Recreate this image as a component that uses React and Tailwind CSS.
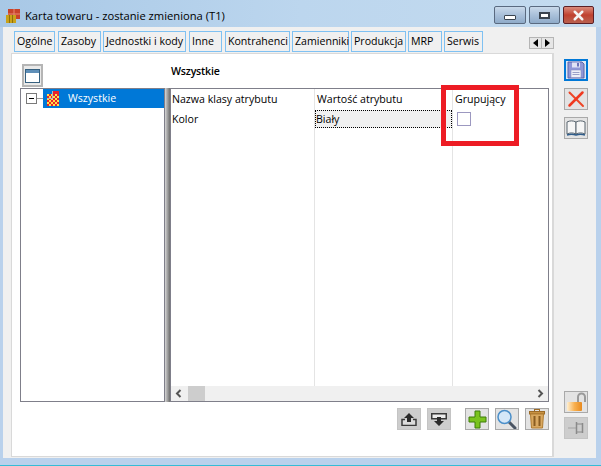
import { X } from "lucide-react";

const font = { fontFamily: '"Open Sans", "Liberation Sans", sans-serif' };

const tabs = [
  ["Ogólne", "w-[41px]", "mr-[3px]"],
  ["Zasoby", "w-[43px]", "mr-[2px]"],
  ["Jednostki i kody", "w-[83px]", "mr-[3px]"],
  ["Inne", "w-[33px]", "mr-[3px]"],
  ["Kontrahenci", "w-[65px]", "mr-[2px]"],
  ["Zamienniki", "w-[57px]", "mr-[2px]"],
  ["Produkcja", "w-[55px]", "mr-[2px]"],
  ["MRP", "w-[34px]", "mr-[2px]"],
  ["Serwis", "w-[39px]", ""],
];

function WindowButtons() {
  return (
    <div className="flex gap-[3px] pt-[6px] pr-[7px]">
      <div className="flex h-[18px] w-[32px] items-end justify-center rounded-[2px] border border-[#5a6a80] bg-gradient-to-b from-[#c9d9ea] via-[#a9c0da] to-[#8fabc9] pb-[3px]">
        <div className="h-[5px] w-[12px] rounded-[1px] border border-[#39434f] bg-white" />
      </div>
      <div className="flex h-[18px] w-[31px] items-center justify-center rounded-[2px] border border-[#5a6a80] bg-gradient-to-b from-[#c9d9ea] via-[#a9c0da] to-[#8fabc9]">
        <div className="h-[7px] w-[11px] border-2 border-[#39434f] bg-white" />
      </div>
      <div className="flex h-[18px] w-[31px] items-center justify-center rounded-[2px] border border-[#5c1f25] bg-gradient-to-b from-[#d98a7c] via-[#c0412f] to-[#b9604f]">
        <X size={15} strokeWidth={4} className="text-[#f4f4f4]" />
      </div>
    </div>
  );
}

function ToolButton({ children, active, flat }) {
  return (
    <div
      className={`flex h-[22px] w-[24px] items-center justify-center border ${
        active ? "border-2 border-[#0078d7] bg-[#dfe8f5]" : flat ? "border-[#c4c4c4] bg-[#cdcdcd]" : "border-[#a9a9a9] bg-[#e3e3e3]"
      }`}
    >
      {children}
    </div>
  );
}

function SaveIcon() {
  return (
    <svg width="18" height="18" viewBox="0 0 18 18">
      <path d="M1 1h14l2 2v14H1z" fill="#8f97d8" stroke="#5c64a8" />
      <rect x="5" y="1.500" width="8" height="5" fill="#dfe3f5" />
      <rect x="10" y="2" width="2" height="3.500" fill="#6a72b8" />
      <rect x="4" y="9" width="10" height="7.500" fill="#eef0f8" stroke="#8a90c0" strokeWidth="0.6" />
      <path d="M5.500 11.500h7M5.500 13.500h7" stroke="#9aa0c8" />
    </svg>
  );
}

function CrossIcon() {
  return (
    <svg width="18" height="18" viewBox="0 0 18 18">
      <path d="M2.500 2.500L16 16" stroke="#ee4526" strokeWidth="2" strokeLinecap="round" />
      <path d="M15.500 2.500L2.500 15.500" stroke="#f0391f" strokeWidth="2.500" strokeLinecap="round" />
    </svg>
  );
}

function BookIcon() {
  return (
    <svg width="20" height="18" viewBox="0 0 20 18">
      <path d="M1 3c3-1.500 6-1.500 9 0v12c-3-1.500-6-1.500-9 0z" fill="#f6f6f6" stroke="#5a6670" />
      <path d="M19 3c-3-1.500-6-1.500-9 0v12c3-1.500 6-1.500 9 0z" fill="#f6f6f6" stroke="#5a6670" />
      <path d="M1 16c3-1 6-1 9 0 3-1 6-1 9 0" fill="none" stroke="#2f5c8a" strokeWidth="1.500" />
    </svg>
  );
}

function UpIcon() {
  return (
    <svg width="16" height="13" viewBox="0 0 16 13">
      <path d="M4 6.500H1v6h14v-6h-3" fill="#dcdcdc" stroke="#3a3a3a" strokeWidth="1.500" />
      <path d="M8 0l5 5h-3v4H6V5H3z" fill="#2b2b2b" />
    </svg>
  );
}

function DownIcon() {
  return (
    <svg width="16" height="13" viewBox="0 0 16 13">
      <rect x="0.750" y="0.750" width="14.500" height="5" fill="#ececec" stroke="#3a3a3a" strokeWidth="1.500" />
      <path d="M8 13l5-5h-3V4H6v4H3z" fill="#2b2b2b" />
    </svg>
  );
}

function PlusIcon() {
  return (
    <svg width="19" height="19" viewBox="0 0 19 19">
      <path d="M7 1h5v6h6v5h-6v6H7v-6H1V7h6z" fill="#7ac31e" stroke="#3d7d08" />
    </svg>
  );
}

function SearchIcon() {
  return (
    <svg width="22" height="20" viewBox="0 0 22 20">
      <path d="M13 13l6 6" stroke="#4b5563" strokeWidth="3" strokeLinecap="round" />
      <circle cx="8.500" cy="8" r="6.500" fill="#d4e7f8" stroke="#4b8fc9" strokeWidth="1.500" />
    </svg>
  );
}

function TrashIcon() {
  return (
    <svg width="16" height="20" viewBox="0 0 16 20">
      <rect x="5.500" y="0.500" width="5" height="2" fill="none" stroke="#9c6b28" />
      <rect x="0.500" y="2.500" width="15" height="2.500" fill="#c89344" stroke="#9c6b28" />
      <path d="M1.500 5h13l-1 14h-11z" fill="#d9a860" stroke="#b07c30" />
      <rect x="4.500" y="7" width="2" height="10" fill="#8a5d20" />
      <rect x="9.500" y="7" width="2" height="10" fill="#8a5d20" />
    </svg>
  );
}

function LockIcon() {
  return (
    <svg width="21" height="20" viewBox="0 0 21 20">
      <defs>
        <linearGradient id="lockBody" x1="0" x2="1" y1="0" y2="0">
          <stop offset="0" stopColor="#ffefd0" />
          <stop offset="0.5" stopColor="#f8b050" />
          <stop offset="1" stopColor="#e88a1e" />
        </linearGradient>
      </defs>
      <path d="M12 10V5a3.500 3.500 0 0 1 7 0v5" fill="none" stroke="#9a9a9a" strokeWidth="2" />
      <rect x="1" y="10" width="15" height="9" rx="1" fill="url(#lockBody)" />
    </svg>
  );
}

function PinIcon() {
  return (
    <svg width="18" height="16" viewBox="0 0 18 16">
      <path d="M1 8h9" stroke="#a3a3a3" />
      <path d="M9.500 2v12M15.500 3v10" stroke="#8a8a8a" strokeWidth="1.500" />
      <path d="M10 4h5M10 12h5" stroke="#8a8a8a" />
    </svg>
  );
}

function AttrIcon() {
  // red and yellow checker swatch with a small grey tag in its corner
  const cells = [];
  for (let y = 0; y < 6; y++) {
    for (let x = 0; x < 6; x++) {
      cells.push(<rect key={`${x}-${y}`} x={x * 2 + 1} y={y * 2 + 3} width="2" height="2" fill={(x + y) % 2 ? "#e8232a" : "#ffe14a"} />);
    }
  }
  return (
    <svg width="14" height="16" viewBox="0 0 14 16" shapeRendering="crispEdges">
      <rect x="7" y="0" width="6" height="4" fill="#e8232a" />
      {cells}
      <rect x="6" y="0" width="1" height="8" fill="#b8b8b8" />
      <rect x="1" y="7" width="6" height="1" fill="#b8b8b8" />
    </svg>
  );
}

export default function App() {
  return (
    <div className="relative h-[466px] w-[601px] overflow-hidden border-b border-[#35bcd6] bg-[#b9d1ec] text-[10.6px] text-black" style={font}>
      {/* title bar */}
      <div className="flex h-[27px] items-start justify-between bg-gradient-to-r from-[#a8c8e6] via-[#bcd6ee] to-[#c4dbef]">
        <div className="flex items-center gap-[5px] pl-[6px] pt-[8px]">
          <svg width="14" height="14" viewBox="0 0 14 14">
            <rect x="2" y="0" width="12" height="10" fill="#c8432a" />
            <path d="M2 5h12M8 0v10" stroke="#e98a70" />
            <rect x="0" y="6" width="10" height="8" fill="#c9a21a" />
            <path d="M3.500 6v8M6.500 6v8" stroke="#8e6f0a" />
          </svg>
          <span className="text-[11.2px] leading-[16px]">Karta towaru - zostanie zmieniona (T1)</span>
        </div>
        <WindowButtons />
      </div>

      {/* client area */}
      <div className="ml-[3px] mr-[5px] h-[431px] bg-[#f0f0f0] pl-[8px]">
        <div className="flex h-[26px] items-start pt-[4px]">
          <div className="ml-[3px] flex">
            {tabs.map(([label, width, gap]) => (
              <div key={label} className={`flex h-[21px] items-center whitespace-nowrap border border-[#7fc1f2] bg-[#f0f0f0] pl-[2px] ${width} ${gap}`}>
                {label}
              </div>
            ))}
          </div>
          <div className="ml-[46px] mt-[6px] flex h-[12px] border border-[#b5b5b5] bg-[#e6e6e6]">
            <div className="flex w-[12px] items-center justify-center border-r border-[#b5b5b5]">
              <div className="h-0 w-0 border-y-[4px] border-r-[5px] border-y-transparent border-r-black" />
            </div>
            <div className="flex w-[11px] items-center justify-center">
              <div className="h-0 w-0 border-y-[4px] border-l-[5px] border-y-transparent border-l-black" />
            </div>
          </div>
        </div>

        <div className="flex">
          {/* tab page */}
          <div className="h-[404px] w-[543px] border border-[#d9d9d9] border-r-[2px] bg-white pl-[8px] pt-[10px]">
            <div className="flex h-[24px]">
              <div className="ml-[2px] flex h-[23px] w-[21px] items-center justify-center border-2 border-[#b5b5b5] bg-[#e9e9e9]">
                <svg width="15" height="14" viewBox="0 0 15 14" shapeRendering="crispEdges">
                  <rect x="0.500" y="0.500" width="14" height="13" fill="white" stroke="#36607f" />
                  <rect x="1" y="1" width="13" height="3" fill="#5f8fb8" />
                </svg>
              </div>
              <div className="ml-[128px] mt-[-1px] font-semibold leading-[16px] tracking-[-0.2px]">Wszystkie</div>
            </div>

            <div className="flex h-[314px]">
              {/* attribute tree */}
              <div className="relative w-[145px] border border-[#7f7f8a]">
                <div className="ml-[22px] flex h-[19px] w-[121px] items-center bg-[#0078d7] pl-[3px] text-white">
                  <AttrIcon />
                  <span className="ml-[8px]">Wszystkie</span>
                </div>
                <div className="absolute left-[5px] top-[4px] flex h-[11px] w-[11px] items-center justify-center border border-[#7a7a7a] bg-white">
                  <div className="h-px w-[5px] bg-black" />
                </div>
                <div className="absolute left-[16px] top-[9px] h-px w-[6px] bg-[#9a9a9a]" />
              </div>

              {/* splitter */}
              <div className="w-[5px] bg-gradient-to-r from-[#d6d6d6] to-[#6f6f6f]" />

              {/* attribute grid */}
              <div className="flex w-[379px] flex-col border border-[#7f7f8a]">
                <div className="flex flex-1">
                  <div className="w-[144px] border-r border-[#e4e4e4] pl-[1px]">
                    <div className="h-[21px] leading-[21px]">Nazwa klasy atrybutu</div>
                    <div className="h-[18px] leading-[18px]">Kolor</div>
                  </div>
                  <div className="w-[138px] border-r border-[#e4e4e4]">
                    <div className="h-[21px] pl-[2px] leading-[21px]">Wartość atrybutu</div>
                    <div className="h-[18px] w-[137px] border border-dotted border-black bg-[#f0f0f0] leading-[16px]">Biały</div>
                  </div>
                  <div className="pl-[2px]">
                    <div className="h-[21px] leading-[21px]">Grupujący</div>
                    <div className="ml-[2px] mt-[2px] h-[14px] w-[14px] border border-[#9c98c0] bg-white" />
                  </div>
                </div>
                <div className="flex h-[15px] items-center bg-[#f0f0f0] pl-[4px] pr-[4px]">
                  <svg width="7" height="9" viewBox="0 0 7 9">
                    <path d="M5.500 1L2 4.500 5.500 8" fill="none" stroke="#555" strokeWidth="2" />
                  </svg>
                  <div className="ml-[6px] h-[15px] w-[17px] bg-[#cdcdcd]" />
                  <div className="flex-1" />
                  <svg width="7" height="9" viewBox="0 0 7 9">
                    <path d="M1.500 1L5 4.500 1.500 8" fill="none" stroke="#555" strokeWidth="2" />
                  </svg>
                </div>
              </div>
            </div>

            <div className="mt-[6px] flex justify-end pr-[3px]">
              <div className="flex gap-[6px]">
                <ToolButton flat><UpIcon /></ToolButton>
                <ToolButton flat><DownIcon /></ToolButton>
              </div>
              <div className="ml-[14px] flex gap-[6px]">
                <ToolButton><PlusIcon /></ToolButton>
                <ToolButton><SearchIcon /></ToolButton>
                <ToolButton><TrashIcon /></ToolButton>
              </div>
            </div>
          </div>

          {/* side toolbar */}
          <div className="ml-[10px] flex h-[404px] flex-col pt-[6px]">
            <div className="flex flex-col gap-[7px]">
              <ToolButton active><SaveIcon /></ToolButton>
              <ToolButton><CrossIcon /></ToolButton>
              <ToolButton><BookIcon /></ToolButton>
            </div>
            <div className="mt-auto flex flex-col gap-[4px] pb-[18px]">
              <ToolButton><LockIcon /></ToolButton>
              <ToolButton flat><PinIcon /></ToolButton>
            </div>
          </div>
        </div>
      </div>

      {/* red highlight frame over the grid */}
      <div className="absolute left-[441px] top-[85px] h-[61px] w-[78px] border-[5px] border-[#ed1c24]" />
    </div>
  );
}
